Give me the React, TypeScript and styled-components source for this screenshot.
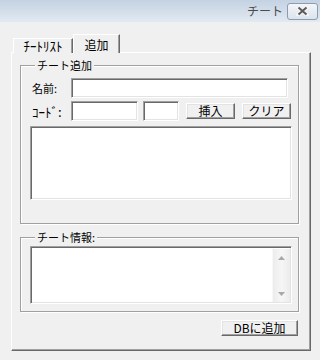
import styled, { createGlobalStyle } from 'styled-components';

const GlobalStyle = createGlobalStyle`
  html, body {
    margin: 0;
    padding: 0;
    background: #f0f0f0;
  }
  body {
    font-family: "Noto Sans CJK JP", "Liberation Sans", sans-serif;
    font-size: 11px;
    color: #000;
  }
`;

const Window = styled.div`
  width: 320px;
  height: 360px;
  display: flex;
  flex-direction: column;
  background: #f0f0f0;
  overflow: hidden;
`;

const TitleBar = styled.div`
  height: 22px;
  flex: none;
  display: flex;
  align-items: center;
  justify-content: flex-end;
  gap: 4px;
  padding-right: 2px;
  background: linear-gradient(#c4d2e2, #e2e9f1);
`;

const Title = styled.span`
  font-size: 12px;
  line-height: 12px;
  color: #4c4c4c;
`;

const CloseButton = styled.button`
  width: 31px;
  height: 17px;
  padding: 0;
  border: 1px solid #8c9bb0;
  border-radius: 3px;
  background: linear-gradient(#f3f6fa, #dbe3ed);
  display: flex;
  align-items: center;
  justify-content: center;
`;

const Body = styled.div`
  flex: 1;
  padding: 12px 0 0 11px;
  display: flex;
  flex-direction: column;
`;

const TabStrip = styled.div`
  display: flex;
  align-items: flex-end;
  padding-left: 2px;
  height: 19px;
  margin-bottom: -1px;
  position: relative;
  z-index: 1;
`;

const Tab = styled.div<{ $active?: boolean }>`
  box-sizing: border-box;
  width: ${(p) => (p.$active ? '47px' : '60px')};
  height: ${(p) => (p.$active ? '19px' : '15px')};
  border-top: 1px solid #fff;
  border-left: 1px solid #fff;
  border-right: 1px solid #696969;
  box-shadow: inset -1px 0 0 #a0a0a0;
  background: #f0f0f0;
  display: flex;
  justify-content: center;
  padding-top: ${(p) => (p.$active ? '3px' : '0')};
  font-size: ${(p) => (p.$active ? '12px' : '13px')};
  line-height: 13px;
`;

const Panel = styled.div`
  box-sizing: border-box;
  width: 300px;
  height: 299px;
  border-top: 1px solid #fff;
  border-left: 1px solid #fff;
  border-right: 1px solid #696969;
  border-bottom: 1px solid #696969;
  box-shadow: inset -1px -1px 0 #a0a0a0;
  padding: 6px 0 0 8px;
  display: flex;
  flex-direction: column;
`;

const Group = styled.fieldset<{ $gap?: number }>`
  box-sizing: border-box;
  width: 279px;
  margin: ${(p) => p.$gap ?? 0}px 0 0 0;
  padding: 6px 0 23px 9px;
  border: 1px solid #a0a0a0;
  box-shadow: inset 1px 1px 0 #fff, 1px 1px 0 #fff;
  min-inline-size: 0;
`;

const Legend = styled.legend`
  margin-left: 5px;
  padding: 0 2px;
  font-size: 11px;
  line-height: 13px;
  background: #f0f0f0;
`;

const Row = styled.div<{ $top?: number }>`
  display: flex;
  align-items: center;
  height: 20px;
  margin-top: ${(p) => p.$top ?? 0}px;
  padding-left: 2px;
`;

const Label = styled.span<{ $narrow?: boolean }>`
  width: 39px;
  flex: none;
  font-size: ${(p) => (p.$narrow ? '13px' : '11px')};
  line-height: 13px;
`;

const sunken = `
  box-sizing: border-box;
  border-style: solid;
  border-width: 1px;
  border-color: #a0a0a0 #fff #fff #a0a0a0;
  box-shadow: inset 1px 1px 0 #696969, inset -1px -1px 0 #e3e3e3;
  background: #fff;
  outline: none;
  margin: 0;
  font-family: inherit;
  font-size: 11px;
`;

const TextBox = styled.input<{ $w: number; $gap?: number }>`
  ${sunken}
  width: ${(p) => p.$w}px;
  height: 20px;
  margin-left: ${(p) => p.$gap ?? 0}px;
  padding: 0 3px;
`;

const Button = styled.button<{ $w: number; $gap?: number }>`
  box-sizing: border-box;
  width: ${(p) => p.$w}px;
  height: 16px;
  margin-left: ${(p) => p.$gap ?? 0}px;
  padding: 0;
  border-style: solid;
  border-width: 1px;
  border-color: #fff #696969 #696969 #fff;
  box-shadow: inset -1px -1px 0 #a0a0a0, inset 1px 1px 0 #e3e3e3;
  background: #f0f0f0;
  font-family: inherit;
  font-size: 12px;
  line-height: 12px;
  color: #000;
`;

const Memo = styled.textarea<{ $h: number }>`
  ${sunken}
  display: block;
  width: 262px;
  height: ${(p) => p.$h}px;
  margin-top: 5px;
  resize: none;
  padding: 2px;
`;

const ListBox = styled.div`
  ${sunken}
  display: flex;
  justify-content: flex-end;
  width: 262px;
  height: 58px;
  padding: 2px 1px 1px 2px;
`;

const ScrollBar = styled.div`
  width: 17px;
  display: flex;
  flex-direction: column;
  justify-content: space-between;
  background: linear-gradient(90deg, #ececec, #f6f6f6 50%, #ececec);
  border-left: 1px solid #f8f8f8;
`;

const Arrow = styled.div`
  height: 17px;
  display: flex;
  align-items: center;
  justify-content: center;
`;

const Footer = styled.div`
  display: flex;
  justify-content: flex-end;
  width: 278px;
  margin-top: 8px;
`;

const CloseIcon = () => (
  <svg width="13" height="10" viewBox="0 0 13 10">
    <path d="M2 1 L11 9 M11 1 L2 9" stroke="#f4f4f4" strokeWidth="4" strokeLinecap="round" />
    <path d="M2.5 1.5 L10.5 8.5 M10.5 1.5 L2.5 8.5" stroke="#5a5a5a" strokeWidth="2" />
  </svg>
);

const ScrollArrow = ({ down }: { down?: boolean }) => (
  <svg width="7" height="4" viewBox="0 0 7 4">
    <path d={down ? 'M0 0 L7 0 L3.5 4 Z' : 'M3.5 0 L7 4 L0 4 Z'} fill="#a8a8a8" />
  </svg>
);

export default function App() {
  return (
    <Window>
      <GlobalStyle />
      <TitleBar>
        <Title>チート</Title>
        <CloseButton>
          <CloseIcon />
        </CloseButton>
      </TitleBar>
      <Body>
        <TabStrip>
          <Tab>ﾁｰﾄﾘｽﾄ</Tab>
          <Tab $active>追加</Tab>
        </TabStrip>
        <Panel>
          <Group>
            <Legend>チート追加</Legend>
            <Row>
              <Label>名前:</Label>
              <TextBox $w={217} />
            </Row>
            <Row $top={3}>
              <Label $narrow>ｺｰﾄﾞ:</Label>
              <TextBox $w={67} />
              <TextBox $w={36} $gap={5} />
              <Button $w={49} $gap={7}>挿入</Button>
              <Button $w={49} $gap={7}>クリア</Button>
            </Row>
            <Memo $h={74} />
          </Group>
          <Group $gap={7} style={{ paddingTop: 2, paddingBottom: 7 }}>
            <Legend>チート情報:</Legend>
            <ListBox>
              <ScrollBar>
                <Arrow>
                  <ScrollArrow />
                </Arrow>
                <Arrow>
                  <ScrollArrow down />
                </Arrow>
              </ScrollBar>
            </ListBox>
          </Group>
          <Footer>
            <Button $w={77}>DBに追加</Button>
          </Footer>
        </Panel>
      </Body>
    </Window>
  );
}
